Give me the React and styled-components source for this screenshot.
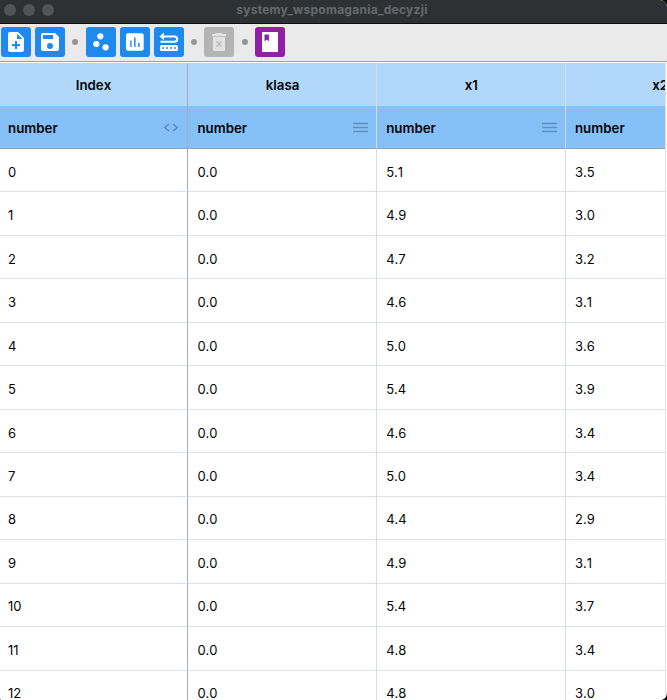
import React from "react";
import styled, { createGlobalStyle } from "styled-components";

const GlobalStyle = createGlobalStyle`
  * { box-sizing: border-box; }
  body { margin: 0; overflow: hidden; background: #000; }
`;

const Window = styled.div`
  width: 667px;
  height: 700px;
  display: flex;
  flex-direction: column;
  overflow: hidden;
  background: #fff;
  border-radius: 0 7px 7px 2px;
  font-family: Inter, "Liberation Sans", sans-serif;
  color: #050505;
`;

const TitleBar = styled.header`
  flex: none;
  height: 24px;
  display: grid;
  grid-template-columns: 60px 1fr 63px;
  align-items: center;
  background: #2d3134;
  border-bottom: 1px solid #0b0c0d;
  padding-bottom: 3px;
`;

const Lights = styled.div`
  display: flex;
  gap: 7px;
  padding-left: 4px;
`;

const Light = styled.span`
  width: 12px;
  height: 12px;
  border-radius: 50%;
  background: #505457;
`;

const Title = styled.h1`
  margin: 0;
  text-align: center;
  font-size: 12px;
  line-height: 18px;
  font-weight: 700;
  letter-spacing: 0.25px;
  color: #66696c;
`;

const Toolbar = styled.nav`
  flex: none;
  height: 38px;
  display: flex;
  align-items: flex-start;
  gap: 4px;
  padding: 3px 0.8px;
  background: #eaeaea;
  border-bottom: 1px solid #a2a2a6;
`;

const tones = { blue: "#1e8af0", gray: "#b4b4b4", purple: "#8f21a8" };

const ToolButton = styled.button`
  width: 30px;
  height: 30.4px;
  padding: 3px;
  border: 0;
  border-radius: 3px;
  background: ${({ $tone }) => tones[$tone]};
  color: ${({ $tone }) => ($tone === "gray" ? "#e3e3e3" : "#fff")};
  svg { display: block; }
`;

const Dot = styled.span`
  width: 6px;
  height: 6px;
  margin: 12px 3.4px 0 3.4px;
  border-radius: 50%;
  background: #969696;
`;

const Table = styled.main`
  flex: 1;
  min-height: 0;
  overflow: hidden;
  margin-right: 1px;
  padding-top: 1px;
  border-right: 1px solid #dfe1ea;
`;

const Row = styled.div`
  display: grid;
  grid-template-columns: 188px 188.8px 188.8px 188.8px;
  height: ${({ $h }) => $h}px;
  background: ${({ $bg }) => $bg || "#fff"};
`;

const Cell = styled.div`
  display: flex;
  align-items: center;
  justify-content: ${({ $center }) => ($center ? "center" : "space-between")};
  padding: ${({ $top }) => $top || 0}px 8px 0 ${({ $first }) => ($first ? 8 : 9.4)}px;
  font-size: ${({ $bold }) => ($bold ? 13.3 : 13)}px;
  font-weight: ${({ $bold }) => ($bold ? 600 : 430)};
  font-kerning: none;
  border-right: 1px solid ${({ $first }) => ($first ? "#a3abba" : "#d8dce8")};
  border-bottom: 1px solid ${({ $line }) => $line || "#dce0ea"};
`;

function Icon({ name }) {
  const shapes = {
    add: <path fillRule="evenodd" d="M6 2h8l6 6v12a2 2 0 0 1-2 2H6a2 2 0 0 1-2-2V4a2 2 0 0 1 2-2Zm7 1.5V9h5.5L13 3.5ZM11 11v3H8v2h3v3h2v-3h3v-2h-3v-3h-2Z" />,
    save: <path fillRule="evenodd" d="M17 3H5a2 2 0 0 0-2 2v14a2 2 0 0 0 2 2h14a2 2 0 0 0 2-2V7l-4-4Zm-5 16a3 3 0 1 1 0-6 3 3 0 0 1 0 6ZM15 9H5V5h10v4Z" />,
    scatter: <g><circle cx="7.3" cy="14" r="3.1" /><circle cx="11.3" cy="6.3" r="3.1" /><circle cx="16.6" cy="17.3" r="3.1" /></g>,
    chart: <path fillRule="evenodd" d="M18.7 3.2H5a2 2 0 0 0-2 2v13.6a2 2 0 0 0 2 2h13.7a2 2 0 0 0 2-2V5.2a2 2 0 0 0-2-2ZM8.6 17H7.2v-6.5h1.4V17Zm4 0h-1.5V7.5h1.5V17Zm4 0h-1.5v-4h1.5v4Z" />,
    route: <g><path d="M5 6.4h12.5a2.7 2.7 0 0 1 0 5.4H3.5" fill="none" stroke="currentColor" strokeWidth="2" /><path d="M2.5 6.4 7 2.5v7.8Z" /><path fillRule="evenodd" d="M4.5 15h15a1.5 1.5 0 0 1 1.5 1.5v3a1.5 1.5 0 0 1-1.5 1.5h-15A1.5 1.5 0 0 1 3 19.5v-3A1.5 1.5 0 0 1 4.5 15ZM5 17.2v1.6h2v-1.6H5Zm4 0v1.6h2v-1.6H9Zm4 0v1.6h2v-1.6h-2Zm4 0v1.6h2v-1.6h-2Z" /></g>,
    trash: <path fillRule="evenodd" d="M9 3h6l1 1h3v2.3H5V4h3l1-1ZM6 7h12v12.5a1.5 1.5 0 0 1-1.5 1.5h-9A1.5 1.5 0 0 1 6 19.5V7Zm3.9 3.9-.9.9 2.1 2.2-2.1 2.2.9.9 2.1-2.2 2.1 2.2.9-.9-2.1-2.2 2.1-2.2-.9-.9-2.1 2.2-2.1-2.2Z" />,
    book: <path fillRule="evenodd" d="M4 2h16v20H4V2Zm2.5 2.5v6.7l2.2-1.5 2.2 1.5V4.5H6.5Z" />,
  };
  return <svg width="24" height="24" viewBox="0 0 24 24" fill="currentColor">{shapes[name]}</svg>;
}

const tools = [
  ["add", "blue"], ["save", "blue"], null,
  ["scatter", "blue"], ["chart", "blue"], ["route", "blue"], null,
  ["trash", "gray"], null, ["book", "purple"],
];

const CodeMark = () => (
  <svg width="16" height="10" viewBox="0 0 16 10" fill="none" stroke="#5a88b0" strokeWidth="1.3">
    <path d="M6 1 1.7 4.5 6 8M10 1l4.3 3.5L10 8" />
  </svg>
);
const LinesMark = () => (
  <svg width="15" height="11" viewBox="0 0 15 11" fill="none" stroke="#6090b9" strokeWidth="1.3">
    <path d="M0 1.5h15M0 5.5h15M0 9.5h15" />
  </svg>
);

const heads = ["Index", "klasa", "x1", "x2"];
const x1 = ["5.1", "4.9", "4.7", "4.6", "5.0", "5.4", "4.6", "5.0", "4.4", "4.9", "5.4", "4.8", "4.8"];
const x2 = ["3.5", "3.0", "3.2", "3.1", "3.6", "3.9", "3.4", "3.4", "2.9", "3.1", "3.7", "3.4", "3.0"];
const rows = x1.map((v, i) => [String(i), "0.0", v, x2[i]]);

export default function App() {
  return (
    <>
      <GlobalStyle />
      <Window>
        <TitleBar>
          <Lights><Light /><Light /><Light /></Lights>
          <Title>systemy_wspomagania_decyzji</Title>
        </TitleBar>
        <Toolbar>
          {tools.map((t, i) => t
            ? <ToolButton key={i} $tone={t[1]} aria-label={t[0]}><Icon name={t[0]} /></ToolButton>
            : <Dot key={i} />)}
        </Toolbar>
        <Table>
          <Row $h={42.5} $bg="#b1d8fa">
            {heads.map((h, i) => <Cell key={h} $center $bold $top={3} $first={i === 0} $line="#bfd4ec">{h}</Cell>)}
          </Row>
          <Row $h={43.5} $bg="#85c1f8">
            {heads.map((h, i) => (
              <Cell key={h} $bold $top={1.5} $first={i === 0} $line="#93a0b0">
                number{i === 0 ? <CodeMark /> : <LinesMark />}
              </Cell>
            ))}
          </Row>
          {rows.map((r) => (
            <Row key={r[0]} $h={43.48}>
              {r.map((v, i) => <Cell key={i} $top={3} $first={i === 0}>{v}</Cell>)}
            </Row>
          ))}
        </Table>
      </Window>
    </>
  );
}
